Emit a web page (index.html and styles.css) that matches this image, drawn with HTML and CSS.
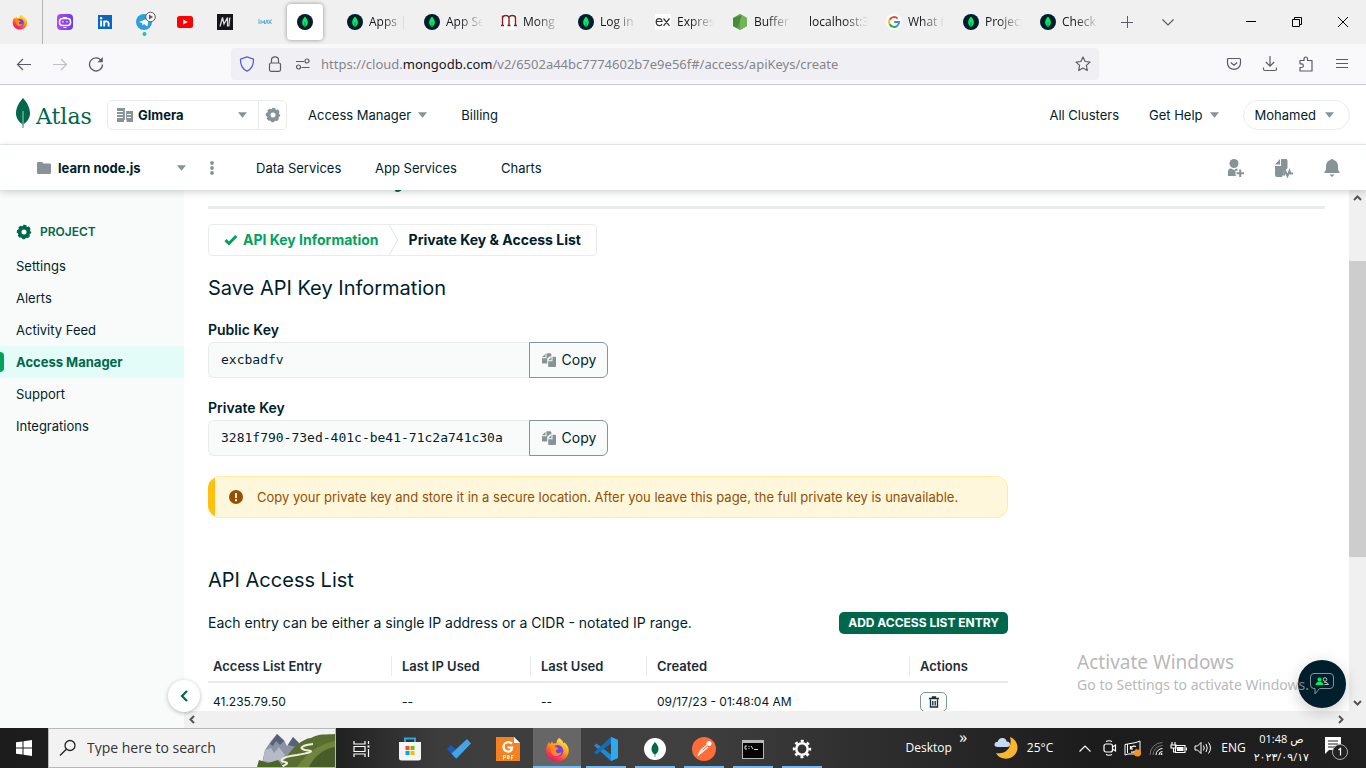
FILE: index.html
```html
<!DOCTYPE html>
<html lang="en">
<head>
<meta charset="utf-8">
<title>Create API Key | Atlas</title>
<link rel="stylesheet" href="styles.css">
</head>
<body>
<svg class="defs" aria-hidden="true">
  <symbol id="mongo" viewBox="0 0 16 16"><circle cx="8" cy="8" r="8" fill="#001e2b"/><path d="M8 2.600C9.800 4.600 10.800 6.400 10.800 8.500 10.800 10.600 9.600 12 8.400 12.600L8.200 13.800H7.800L7.600 12.600C6.400 12 5.200 10.600 5.200 8.500 5.200 6.400 6.200 4.600 8 2.600Z" fill="#00ed64"/><path d="M8 8v5" stroke="#00684a" stroke-width=".7"/></symbol>
  <symbol id="gear" viewBox="0 0 16 16"><circle cx="8" cy="8" r="4.400" fill="none" stroke="currentColor" stroke-width="3.800"/><circle cx="8" cy="8" r="6.300" fill="none" stroke="currentColor" stroke-width="1.800" stroke-dasharray="3.100 1.848" stroke-dashoffset="1.550"/></symbol>
  <symbol id="caret" viewBox="0 0 9 6"><path d="M0 .300h9L4.500 5.700Z" fill="currentColor"/></symbol>
  <symbol id="copy" viewBox="0 0 16 16"><path d="M1 5.200 4.500 1.700V5.200ZM5.500 1.200H9.500L10.300 2V4.500H8.500L6.200 6.800V11.500H2C1.400 11.500 1 11.100 1 10.500V6.200H5.500Z" fill="currentColor"/><path d="M7.200 8.200 10.500 5V8.200ZM11.500 4.800H14C14.600 4.800 15 5.200 15 5.800V14C15 14.600 14.600 15 14 15H8.200C7.600 15 7.200 14.600 7.200 14V9.200H11.500Z" fill="currentColor"/></symbol>
  <symbol id="firefox" viewBox="0 0 24 24"><defs><linearGradient id="ffg" x1=".8" y1="0" x2=".2" y2="1"><stop offset="0" stop-color="#fff44f"/><stop offset=".45" stop-color="#ff980e"/><stop offset=".75" stop-color="#ff3750"/><stop offset="1" stop-color="#eb0878"/></linearGradient></defs><path d="M13.500 1C16 2.500 17.300 4.200 17.800 6L19 5.200C21.800 8 23 10.500 22.800 13.600 22.400 19.300 17.800 23.400 12 23.400 5.800 23.400 1 18.800 1 12.800 1 9.500 2.300 6.800 4 4.800L4.800 7 6.800 4.200 7.800 6.500C9 6 10 5.900 11 6.200 11 4 12 2.200 13.500 1Z" fill="url(#ffg)"/><circle cx="12" cy="13.300" r="5.700" fill="#7542e5"/><path d="M5.500 9.500C8 8 9.500 8.500 11.500 10.300 13 10.500 13.300 11.300 11.800 12 10 12.500 9.800 14 11.300 15 13.300 16.200 15 15 16.200 14.200 15.500 17.500 12.500 19 9.500 18 6.500 17 4.800 13.200 5.500 9.500Z" fill="#ff8a16"/></symbol>
</svg>

<header class="browser">
  <div class="tabs">
    <button class="view-tab" aria-label="Firefox View"><svg width="16" height="16"><use href="#firefox"/></svg></button>
    <button class="pin" aria-label="Chatbot"><svg width="16" height="16" viewBox="0 0 16 16"><defs><linearGradient id="bot"><stop stop-color="#b04bf5"/><stop offset="1" stop-color="#6a3de8"/></linearGradient></defs><rect width="16" height="16" rx="4" fill="url(#bot)"/><rect x="2.500" y="4.500" width="11" height="7" rx="3" fill="none" stroke="#fff" stroke-width="1.500"/><path d="M6 7v1.500M10 7v1.500M6.500 13.500h3M6 3.500h4" stroke="#fff" stroke-width="1.200"/></svg></button>
    <button class="pin" aria-label="LinkedIn"><svg width="14" height="14" viewBox="0 0 14 14"><path d="M0 0h14v14H0Z" fill="#0a66c2"/><path d="M3.100 5.500V11.500M6.200 5.500V11.500M6.200 8.500C6.200 5.800 10.600 5.500 10.600 8.500V11.500" fill="none" stroke="#fff" stroke-width="1.900"/><circle cx="3.100" cy="3.200" r="1.200" fill="#fff"/></svg></button>
    <button class="pin" aria-label="Telegram"><svg width="22" height="28" viewBox="0 0 22 28"><circle cx="10" cy="14" r="8" fill="#2ba0d9"/><path d="M5 14 15 10 13.300 18.500 10 16 8.500 17.500 8.200 15Z" fill="#fff"/><circle cx="16.500" cy="9" r="4.800" fill="#f5f5f5" stroke="#5b5b66" stroke-width="1"/><path d="M15 6.500 19 9 15 11.500Z" fill="#5b5b66"/><circle cx="10.500" cy="26" r="2" fill="#2ac3a2"/></svg></button>
    <button class="pin" aria-label="YouTube"><svg width="16" height="12" viewBox="0 0 16 12"><rect width="16" height="12" rx="2.500" fill="#f00"/><path d="M6.200 3.500 10.800 6 6.200 8.500Z" fill="#fff"/></svg></button>
    <button class="pin" aria-label="Medium"><svg width="16" height="16" viewBox="0 0 16 16"><path d="M0 0h16v16H0Z" fill="#15141a"/><path d="M3 12.500 5.500 3.500 7 10 10.500 3.500V12.500M12.800 3.500 11.800 12.500" fill="none" stroke="#ddd" stroke-width="1.300"/></svg></button>
    <button class="pin" aria-label="Imax"><svg width="14" height="6" viewBox="0 0 14 6"><path d="M1 0V5M3 5V1.500L5 4 6.500 1V5M7.500 5 9 1 10.200 5M10.500.500 13.500 5M13.500.500 10.500 5" fill="none" stroke="#55afd8" stroke-width="1"/></svg></button>
    <button class="pin active" aria-label="Atlas"><svg width="16" height="16"><use href="#mongo"/></svg></button>
    <div class="tab-list">
      <button class="tab"><svg width="16" height="16"><use href="#mongo"/></svg><span>Apps |</span></button>
      <button class="tab"><svg width="16" height="16"><use href="#mongo"/></svg><span>App Se</span></button>
      <button class="tab"><svg width="16" height="16" viewBox="0 0 16 16"><path d="M0 0h16v16H0Z" fill="#fff"/><path d="M1.500 11.500V1.500M1.500 4C2 1 8 .500 8 4V11.500M8 4C8 .500 14.500 1 14.500 4V11.500M0 11.500H3M6.500 11.500H9.500M13 11.500H16" fill="none" stroke="#8e1c1f" stroke-width="1.400"/></svg><span>Mong</span></button>
      <button class="tab"><svg width="16" height="16"><use href="#mongo"/></svg><span>Log in</span></button>
      <button class="tab"><svg width="16" height="16" viewBox="0 0 16 16"><path d="M0 0h16v16H0Z" fill="#fff"/><path d="M1.500 7.500H7C7 3.500 1.200 3.500 1.200 8 1.200 12.500 6 12.200 7 10M8.500 4.500 14.500 11.800M14.500 4.500 8.500 11.800" fill="none" stroke="#333" stroke-width="1.200"/></svg><span>Expres</span></button>
      <button class="tab"><svg width="16" height="16" viewBox="0 0 16 16"><path d="M8 0 15 4V12L8 16 1 12V4Z" fill="#5a9e48"/><path d="M8 0 15 4V12L8 16Z" fill="#72b553"/><path d="M1 4 10 1.200 5 14.200 1 12Z" fill="#4b8a3c"/></svg><span>Buffer</span></button>
      <button class="tab"><span>localhost:3</span></button>
      <button class="tab"><svg width="16" height="16" viewBox="0 0 16 16"><circle cx="8" cy="8" r="8" fill="#fff"/><g fill="none" stroke-width="2"><path d="M11.500 4.500A5 5 0 0 0 3.600 5.700" stroke="#ea4335"/><path d="M3.600 5.700A5 5 0 0 0 3.600 10.300" stroke="#fbbc05"/><path d="M3.600 10.300A5 5 0 0 0 11.300 11.700" stroke="#34a853"/><path d="M11.300 11.700A5 5 0 0 0 13 8H8.200" stroke="#4285f4"/></g></svg><span>What i</span></button>
      <button class="tab"><svg width="16" height="16"><use href="#mongo"/></svg><span>Project</span></button>
      <button class="tab"><svg width="16" height="16"><use href="#mongo"/></svg><span>Check</span></button>
    </div>
    <button class="strip-btn plus" aria-label="New tab"><svg width="12" height="12" viewBox="0 0 12 12"><path d="M6.500 0v12M0 6.500h12" stroke="#5b5b66"/></svg></button>
    <button class="strip-btn" aria-label="List all tabs"><svg width="12" height="7" viewBox="0 0 12 7"><path d="M.500.500 6 6 11.500.500" fill="none" stroke="#5b5b66" stroke-width="1.200"/></svg></button>
    <div class="window-btns">
      <button aria-label="Minimize"><svg width="10" height="10" viewBox="0 0 10 10"><path d="M0 4.500h10" stroke="#000"/></svg></button>
      <button aria-label="Restore"><svg width="10" height="10" viewBox="0 0 10 10"><path d="M.500 2.500h7v7h-7ZM2.500 2.500V.500h7v7h-2" fill="none" stroke="#000"/></svg></button>
      <button aria-label="Close"><svg width="10" height="10" viewBox="0 0 10 10"><path d="M0 0l10 10M10 0 0 10" stroke="#000"/></svg></button>
    </div>
  </div>
  <div class="toolbar">
    <button aria-label="Back"><svg width="16" height="16" viewBox="0 0 16 16"><path d="M15 8.500H1.500M7 3 1.500 8.500 7 14" fill="none" stroke="#5b5b66" stroke-width="1.200"/></svg></button>
    <button aria-label="Forward" disabled><svg width="16" height="16" viewBox="0 0 16 16"><path d="M1 8.500H14.500M9 3 14.500 8.500 9 14" fill="none" stroke="#bfbfc5" stroke-width="1.200"/></svg></button>
    <button aria-label="Reload"><svg width="16" height="16" viewBox="0 0 16 16"><path d="M13.500 5A6.500 6.500 0 1 0 14.500 8.500" fill="none" stroke="#5b5b66" stroke-width="1.300"/><path d="M14.800 1V6.300H9.500Z" fill="#5b5b66"/></svg></button>
    <div class="urlbar">
      <svg width="16" height="16" viewBox="0 0 16 16"><path d="M8 .800 14.500 3.200C14.800 8.500 13.200 12.500 8 15.200 2.800 12.500 1.200 8.500 1.500 3.200Z" fill="none" stroke="#5a5fd8" stroke-width="1.300" stroke-linejoin="round"/></svg>
      <svg width="16" height="16" viewBox="0 0 16 16"><rect x="2.500" y="7" width="11" height="8.300" rx="1.500" fill="none" stroke="#5b5b66" stroke-width="1.200"/><path d="M4.500 7V4C4.500-.200 11.500-.200 11.500 4V7" fill="none" stroke="#5b5b66" stroke-width="1.200"/></svg>
      <svg width="16" height="16" viewBox="0 0 16 16"><g fill="none" stroke="#5b5b66" stroke-width="1.200"><path d="M1 5.500H9M6.500 11.500H14.500"/><circle cx="12" cy="5" r="2"/><circle cx="3.500" cy="11" r="2"/></g></svg>
      <div class="url" role="textbox" contenteditable="true" spellcheck="false" aria-label="Address">https://cloud.<b>mongodb.com</b>/v2/6502a44bc7774602b7e9e56f#/access/apiKeys/create</div>
      <button aria-label="Bookmark"><svg width="16" height="16" viewBox="0 0 16 16"><path d="M8 1 10.100 5.500 15 6.100 11.400 9.400 12.300 14.500 8 12 3.700 14.500 4.600 9.400 1 6.100 5.900 5.500Z" fill="none" stroke="#5b5b66" stroke-width="1.200" stroke-linejoin="round"/></svg></button>
    </div>
    <div class="tools">
      <button aria-label="Pocket"><svg width="16" height="16" viewBox="0 0 16 16"><path d="M2.500 2.500H13.500Q14.500 2.500 14.500 3.500V7C14.500 15.500 1.500 15.500 1.500 7V3.500Q1.500 2.500 2.500 2.500ZM4.800 6.500 8 9.300 11.200 6.500" fill="none" stroke="#5b5b66" stroke-width="1.200"/></svg></button>
      <button aria-label="Downloads"><svg width="16" height="16" viewBox="0 0 16 16"><path d="M8 0V10M3.800 6 8 10.200 12.200 6M1.500 11.500V13Q1.500 14.500 3 14.500H13Q14.500 14.500 14.500 13V11.500" fill="none" stroke="#5b5b66" stroke-width="1.200"/></svg></button>
      <button aria-label="Extensions"><svg width="16" height="16" viewBox="0 0 16 16"><path d="M2 7V4.500H6V3C6 .300 9.500.300 9.500 3V4.500H14V15H2V11.500H3.500C6 11.500 6 7.800 3.500 7.800H2Z" fill="none" stroke="#5b5b66" stroke-width="1.200" stroke-linejoin="round"/></svg></button>
      <button aria-label="Menu"><svg width="12" height="12" viewBox="0 0 12 12"><path d="M0 1.500h12M0 5.500h12M0 9.500h12" stroke="#5b5b66"/></svg></button>
    </div>
  </div>
</header>

<div class="app">
  <header class="topnav">
    <a class="logo" href="#"><svg width="14" height="30" viewBox="0 0 14 30"><path d="M7 0C11 4.500 14 9.500 14 15.500 14 20 11 24 7.700 26L7.300 30H6.700L6.300 26C3 24 0 20 0 15.500 0 9.500 3 4.500 7 0Z" fill="#00684a"/><path d="M7 13V29" stroke="#a9c8bd"/></svg><span>Atlas</span></a>
    <div class="org">
      <svg width="16" height="14" viewBox="0 0 16 14"><path d="M0 0H8V3H16V14H9.500V12H7V14H0Z" fill="#889397"/><path d="M0 3.500H6M0 6.500H6M0 9.500H6M8.500 1V14M10 6.500H14M10 9.500H14" stroke="#fff" stroke-width="1.200"/></svg>
      <select aria-label="Organization"><option>Glmera</option></select>
      <svg class="caret" width="9" height="6"><use href="#caret"/></svg>
      <button aria-label="Organization settings"><svg width="16" height="16"><use href="#gear"/></svg></button>
    </div>
    <button class="nav-menu first">Access Manager <svg class="caret" width="9" height="6"><use href="#caret"/></svg></button>
    <a class="billing" href="#">Billing</a>
    <nav class="account">
      <a href="#">All Clusters</a>
      <button class="nav-menu">Get Help <svg class="caret" width="9" height="6"><use href="#caret"/></svg></button>
      <button class="user">Mohamed <svg class="caret" width="9" height="6"><use href="#caret"/></svg></button>
    </nav>
  </header>
  <div class="subnav">
    <svg width="14" height="12" viewBox="0 0 14 12"><path d="M0 1.200Q0 0 1.200 0H5.200L6.500 1.500H12.800Q14 1.500 14 2.700V10.800Q14 12 12.800 12H1.200Q0 12 0 10.800Z" fill="#889397"/></svg>
    <select aria-label="Project"><option>learn node.js</option></select>
    <svg class="caret" width="9" height="6"><use href="#caret"/></svg>
    <button class="dots" aria-label="Project menu"><svg width="4" height="14" viewBox="0 0 4 14"><g fill="#889397"><circle cx="2" cy="2" r="1.900"/><circle cx="2" cy="7" r="1.900"/><circle cx="2" cy="12" r="1.900"/></g></svg></button>
    <nav class="products"><a class="data" href="#">Data Services</a><a class="services" href="#">App Services</a><a href="#">Charts</a></nav>
    <div class="sub-icons">
      <button aria-label="Invite"><svg width="18" height="20" viewBox="0 0 18 20"><g fill="#889397"><circle cx="7" cy="5.500" r="4.500"/><path d="M1 18V13.500Q1 10.500 4 10.500L7 12 9.500 10.500 10.500 10.800V12.800H8.500V17.500H9.500V18Z"/><path d="M12.200 11.500h2v2.700h2.800v2h-2.800V19h-2v-2.800H9.500v-2h2.700Z"/></g></svg></button>
      <button aria-label="Activity"><svg width="20" height="20" viewBox="0 0 20 20"><g fill="#889397"><path d="M1 6.500 6 1V6.500ZM7 1H12Q13.500 1 13.500 2.500V10L10 14 8 19H3Q1 19 1 17V8H7Z"/></g><path d="M9.500 17.500 11.500 13.500 13.500 18 15.500 13 16.500 15.500H19" fill="none" stroke="#889397" stroke-width="2"/></svg></button>
      <button aria-label="Notifications"><svg width="16" height="20" viewBox="0 0 16 20"><path d="M8 1Q9.500 1 9.500 2C12.500 2.800 14 5 14 8V11.500L15.500 14V15H.500V14L2 11.500V8C2 5 3.500 2.800 6.500 2Q6.500 1 8 1ZM5.500 16.500H10.500L8 19Z" fill="#889397"/></svg></button>
    </div>
  </div>

  <div class="workspace">
    <aside class="sidebar">
      <h2><svg width="16" height="16"><use href="#gear"/></svg>PROJECT</h2>
      <nav>
        <a href="#">Settings</a><a href="#">Alerts</a><a href="#">Activity Feed</a><a class="current" href="#">Access Manager</a><a href="#">Support</a><a href="#">Integrations</a>
      </nav>
      <button class="collapse" aria-label="Collapse sidebar"><svg width="10" height="12" viewBox="0 0 10 12"><path d="M8 1 3 6 8 11" fill="none" stroke="#00684a" stroke-width="2.200"/></svg></button>
    </aside>
    <div class="pane">
      <div class="pane-row">
        <main>
          <h1>Create API Key</h1>
          <hr>
          <ol class="steps">
            <li class="done"><svg width="14" height="12" viewBox="0 0 14 12"><path d="M1.500 6.200 5 9.500 12.300 2" fill="none" stroke="#00a35c" stroke-width="3"/></svg>API Key Information</li>
            <li class="sep" aria-hidden="true"><svg width="10" height="30" viewBox="0 0 10 30"><path d="M.500 0 8.500 15 .500 30" fill="none" stroke="#dfe5e2"/></svg></li>
            <li>Private Key &amp; Access List</li>
          </ol>
          <h3>Save API Key Information</h3>
          <div class="field">
            <label for="public">Public Key</label>
            <div class="copyable"><input id="public" readonly value="excbadfv"><button><svg width="16" height="16"><use href="#copy"/></svg>Copy</button></div>
          </div>
          <div class="field">
            <label for="private">Private Key</label>
            <div class="copyable"><input id="private" readonly value="3281f790-73ed-401c-be41-71c2a741c30a"><button><svg width="16" height="16"><use href="#copy"/></svg>Copy</button></div>
          </div>
          <div class="banner" role="alert"><svg width="14" height="14" viewBox="0 0 14 14"><circle cx="7" cy="7" r="7" fill="#944f01"/><path d="M7 3V8M7 9.300V11.200" stroke="#fef7db" stroke-width="2"/></svg><p>Copy your private key and store it in a secure location. After you leave this page, the full private key is unavailable.</p></div>
          <h3 class="access-title">API Access List</h3>
          <div class="access-intro"><p>Each entry can be either a single IP address or a CIDR - notated IP range.</p><button>ADD ACCESS LIST ENTRY</button></div>
          <table>
            <colgroup><col class="c1"><col class="c2"><col class="c3"><col class="c4"><col></colgroup>
            <thead><tr><th><span>Access List Entry</span></th><th><span>Last IP Used</span></th><th><span>Last Used</span></th><th><span>Created</span></th><th><span>Actions</span></th></tr></thead>
            <tbody><tr><td>41.235.79.50</td><td>--</td><td>--</td><td>09/17/23 - 01:48:04 AM</td><td><button aria-label="Delete"><svg width="12" height="12" viewBox="0 0 12 12"><path d="M1 2.500H11M4.500 2V1H7.500V2M2.500 3.500V11H9.500V3.500M4.800 5V9.500M7.200 5V9.500" fill="none" stroke="#1c2d38" stroke-width="1.300"/></svg></button></td></tr></tbody>
          </table>
        </main>
        <div class="vscroll"><svg width="9" height="6" viewBox="0 0 9 6"><path d="M1 5 4.500 1.500 8 5" fill="none" stroke="#555" stroke-width="2"/></svg><div class="thumb"></div><svg width="9" height="6" viewBox="0 0 9 6"><path d="M1 1 4.500 4.500 8 1" fill="none" stroke="#555" stroke-width="2"/></svg></div>
      </div>
      <div class="hscroll"><svg width="6" height="9" viewBox="0 0 6 9"><path d="M5 1 1.500 4.500 5 8" fill="none" stroke="#555" stroke-width="2"/></svg><svg width="6" height="9" viewBox="0 0 6 9"><path d="M1 1 4.500 4.500 1 8" fill="none" stroke="#555" stroke-width="2"/></svg></div>
      <button class="chat" aria-label="Chat"><svg width="26" height="26" viewBox="0 0 26 26"><path d="M5 2.500H21Q24.500 2.500 24.500 6V14Q24.500 17.500 21 17.500H10.500L6 23V17.500H5Q1.500 17.500 1.500 14V6Q1.500 2.500 5 2.500Z" fill="none" stroke="#889397"/><g fill="#00ed64"><circle cx="10.500" cy="8.500" r="2"/><path d="M6.500 14Q7 10.800 10.500 10.800T14.500 14Z"/></g><circle cx="16" cy="8.500" r="1.800" fill="none" stroke="#c1c7c6"/><path d="M15 11.200Q19 11 19.500 13.500H15.500" fill="none" stroke="#c1c7c6"/></svg></button>
      <div class="watermark"><p class="big">Activate Windows</p><p>Go to Settings to activate Windows.</p></div>
    </div>
  </div>
</div>

<footer class="taskbar">
  <button class="start" aria-label="Start"><svg width="16" height="16" viewBox="0 0 16 16"><path d="M0 2.300 6.500 1.400V7.500H0ZM7.500 1.200 16 0V7.500H7.500ZM0 8.500H6.500V14.600L0 13.700ZM7.500 8.500H16V16L7.500 14.800Z" fill="#fff"/></svg></button>
  <label class="search">
    <svg width="18" height="18" viewBox="0 0 18 18"><circle cx="11" cy="6.500" r="5" fill="none" stroke="#222" stroke-width="1.300"/><path d="M7.300 10.200 1 16.500" stroke="#222" stroke-width="1.300"/></svg>
    <input type="text" placeholder="Type here to search" aria-label="Search">
    <svg width="78" height="34" viewBox="0 0 78 34"><path d="M4 34 8 17 14 8 20 1 27 7 30 13 36 4 42 10 55 34Z" fill="#8b93a5"/><path d="M13 11 20 1 27 8 23 12 19 8 16 13ZM31 12 36 4 42 10 39 14Z" fill="#596078"/><path d="M8 17 14 15 17 20 22 14 28 22 20 30 6 28Z" fill="#b6bac7"/><path d="M24 34C30 20 43 6 54 5 62 0 70 2 78 1V34Z" fill="#596d31"/><path d="M40 34C50 20 60 12 78 8V34Z" fill="#6f843c"/><path d="M52 34C58 22 67 16 78 14V34Z" fill="#475c29"/><path d="M56 11C47 12 40 15 48 17 60 18 52 20 40 22 24 24 21 28 28 29 33 30 28 32 24 34" fill="none" stroke="#eceddc" stroke-width="2"/><path d="M0 34 2 27 11 30 21 27 26 34Z" fill="#4d6529"/></svg>
  </label>
  <div class="apps">
    <button aria-label="Task view"><svg width="17" height="16" viewBox="0 0 17 16"><path d="M1 0V3H12V0M1 16V13H12V16M1 5.500H12V10.500H1ZM15.500 0V3M15.500 8V16" fill="none" stroke="#fff" stroke-width="1.200"/><path d="M14.500 4.500h2v2h-2Z" fill="#fff"/></svg></button>
    <button aria-label="Store"><svg width="24" height="24" viewBox="0 0 24 24"><path d="M7 6V1.500H17V6" fill="none" stroke="#23a9e1" stroke-width="2"/><path d="M1 5H23V21Q23 23.500 20.500 23.500H3.500Q1 23.500 1 21Z" fill="#f4f4f4"/><path d="M7.500 9H11.500V13H7.500Z" fill="#f25022"/><path d="M12.500 9H16.500V13H12.500Z" fill="#7fba00"/><path d="M7.500 14H11.500V18H7.500Z" fill="#00a4ef"/><path d="M12.500 14H16.500V18H12.500Z" fill="#ffb900"/></svg></button>
    <button aria-label="To Do"><svg width="24" height="22" viewBox="0 0 24 22"><path d="M0 11 4 7 12 15 8 19.500Z" fill="#185abd"/><path d="M8 19.500 4.500 15.500 20 1 24 5.500 9.500 20.500Z" fill="#41a5ee"/></svg></button>
    <button aria-label="PDF reader"><svg width="24" height="24" viewBox="0 0 24 24"><path d="M0 0H18L24 6V24H0Z" fill="#f58220"/><path d="M18 0V6H24Z" fill="#fff"/><path d="M16 6.500C12 3.500 7.500 6 7.500 10 7.500 14.500 13 16 15.500 13L16 10.500H11.500" fill="none" stroke="#fff" stroke-width="2.200"/><path d="M7.500 22.500V18.500H9.500V20.500H7.500M11.500 18.500V21.500H13V18.500ZM15.500 22.500V18.500H17.500M15.500 20.500H17" fill="none" stroke="#fff"/></svg></button>
    <button class="on open" aria-label="Firefox"><svg width="25" height="25"><use href="#firefox"/></svg></button>
    <button class="open" aria-label="VS Code"><svg width="24" height="24" viewBox="0 0 24 24"><path d="M17 0 24 3V21L17 24 0 8.500 2.500 6.500 17 17.500Z" fill="#1f8ad2"/><path d="M17 6.500 2.500 17.500 0 15.500 17 0Z" fill="#0f6fb8"/><path d="M17 0 24 3V21L17 24Z" fill="#2ea8ee"/></svg></button>
    <button class="open" aria-label="Compass"><svg width="22" height="22" viewBox="0 0 22 22"><circle cx="11" cy="11" r="11" fill="#fff"/><path d="M11 4C17 10 14 15 11.300 16.500V19H10.700V16.500C8 15 5 10 11 4Z" fill="#00684a"/></svg></button>
    <button class="open" aria-label="Postman"><svg width="24" height="24" viewBox="0 0 24 24"><circle cx="12" cy="12" r="12" fill="#ff6c37"/><circle cx="17" cy="6.500" r="2.500" fill="#fff"/><path d="M15 8 9 13 10.500 14.500 16 10M9 13 6 18.500 10.500 14.500" fill="#ff6c37" stroke="#fff" stroke-width="1.300"/></svg></button>
    <button class="open" aria-label="Terminal"><svg width="22" height="19" viewBox="0 0 22 19"><path d="M0 0H22V19H0Z" fill="#b8b8b8"/><path d="M1 3H21V18H1Z" fill="#050505"/><path d="M5 6H3V9H5M7 6v1M7 8v1M9 6l2 3M12 9.500h4" fill="none" stroke="#ddd"/></svg></button>
    <button class="open" aria-label="Settings"><svg width="20" height="20" viewBox="0 0 20 20"><circle cx="10" cy="10" r="5.700" fill="none" stroke="#fff" stroke-width="2.500"/><circle cx="10" cy="10" r="8" fill="none" stroke="#fff" stroke-width="2.400" stroke-dasharray="3 3.283" stroke-dashoffset="1.500"/></svg></button>
  </div>
  <div class="tray">
    <span class="desk">Desktop</span><button class="more" aria-label="More">»</button>
    <button class="weather"><svg width="24" height="24" viewBox="0 0 24 24"><path d="M16 1C24 4 26 14 20 19.500 14 25 5 23 2 17 11 19 19 12 16 1Z" fill="#fbb62d"/><path d="M4 11Q0 11 .500 8 1 5.500 3.500 6 5 1.500 9 2 12.500 2.500 12.500 5.500 16 5.500 16 8.500 16 11 13 11Z" fill="#c8daf3"/></svg>25°C</button>
    <div class="status">
      <button class="chevron" aria-label="Hidden icons"><svg width="12" height="7" viewBox="0 0 12 7"><path d="M.500 6.500 6 1 11.500 6.500" fill="none" stroke="#fff" stroke-width="1.200"/></svg></button>
      <button aria-label="Meet now"><svg width="14" height="16" viewBox="0 0 14 16"><g fill="none" stroke="#fff" stroke-width="1.200"><rect x="1" y="4" width="8.500" height="8" rx="2"/><path d="M9.500 7 12.500 5V11L9.500 9M3 1.500Q6 0 9 1.500M3 14.500Q6 16 9 14.500"/></g></svg></button>
      <button aria-label="Updates"><svg width="18" height="17" viewBox="0 0 18 17"><path d="M1 4.500 12 2.500 16 1V14H4L1 15ZM3.500 13V4" fill="none" stroke="#fff"/><path d="M12 6.500Q8 5 6.500 9M6.500 6V9H9M7 12Q11 13 12.500 9.500" fill="none" stroke="#fff" stroke-width="1.200"/><circle cx="13.500" cy="13" r="3.500" fill="#f7941d"/></svg></button>
      <button aria-label="Network"><svg width="14" height="14" viewBox="0 0 14 14"><g fill="none"><path d="M1 14A12.500 12.500 0 0 1 13.500 1.500M4 14A9.500 9.500 0 0 1 13.500 4.500" stroke="#777"/><path d="M7 14A6.500 6.500 0 0 1 13.500 7.500M10 14A3.500 3.500 0 0 1 13.500 10.500" stroke="#fff"/></g><circle cx="12.500" cy="13" r="1" fill="#fff"/></svg></button>
      <button aria-label="Battery"><svg width="17" height="14" viewBox="0 0 17 14"><path d="M5.500 4.500H15V11.500H5.500ZM16.500 6.500V9.500M2 1V4M5 1V4M1 4H6V7H1ZM3.500 7V11H5" fill="none" stroke="#fff" stroke-width="1.100"/><path d="M7 6H13.500V10H7Z" fill="#fff"/></svg></button>
      <button aria-label="Volume"><svg width="18" height="14" viewBox="0 0 18 14"><path d="M1 5H3.500L7 1.500V12.500L3.500 9H1ZM9.500 4.500Q11 7 9.500 9.500M12 3Q14.500 7 12 11M14.500 1.500Q18.500 7 14.500 12.500" fill="none" stroke="#fff"/></svg></button>
    </div>
    <span class="lang">ENG</span>
    <div class="clock"><span>01:48 ص</span><span>٢٠٢٣/٠٩/١٧</span></div>
    <button class="notify" aria-label="Notifications"><svg width="24" height="26" viewBox="0 0 24 26"><path d="M1 2H17V15H5L1 19Z" fill="#fff"/><path d="M4 6H14M4 9H14M4 12H11" stroke="#222" stroke-width="1.200"/><circle cx="16" cy="17" r="7.500" fill="#222" stroke="#aaa"/><path d="M14.500 15 16.500 13.500V20.500" fill="none" stroke="#fff" stroke-width="1.200"/></svg></button>
  </div>
</footer>
</body>
</html>
```
FILE: styles.css
```css
* { box-sizing: border-box; }
body {
  margin: 0;
  height: 100vh;
  display: flex;
  flex-direction: column;
  overflow: hidden;
  background: #fff;
  color: #001e2b;
  font: 13px/20px Inter, "Liberation Sans", sans-serif;
}
button, input, select { font: inherit; color: inherit; }
button { padding: 0; border: 0; background: none; display: flex; align-items: center; justify-content: center; flex: none; }
a { color: inherit; text-decoration: none; }
svg { flex: none; display: block; }
p, h1, h2, h3, ol { margin: 0; padding: 0; }
.defs { position: absolute; width: 0; height: 0; }

/* Browser chrome */
.browser { flex: none; background: #f9f9fb; border-bottom: 1px solid #ccccd1; font-family: "Open Sans", "Noto Sans", sans-serif; }
.tabs { display: flex; align-items: center; height: 44px; background: #f0f0f0; color: #15141a; font-size: 12px; }
.view-tab { width: 43px; height: 44px; padding-right: 2px; border-right: 1px solid #b5b5b8; margin-right: 2px; }
.pin { width: 40px; height: 36px; }
.pin.active { width: 36px; margin: 0 2px; background: #fff; border-radius: 4px; box-shadow: 0 0 4px rgba(0, 0, 0, .4); }
.tab-list { display: flex; margin-left: 12px; min-width: 0; }
.tab { width: 77px; height: 36px; padding: 0 0 0 10px; gap: 6px; justify-content: flex-start; }
.tab span { flex: 1; min-width: 0; white-space: nowrap; text-align: left; -webkit-mask-image: linear-gradient(to left, transparent 8px, #000 32px); mask-image: linear-gradient(to left, transparent 8px, #000 32px); }
.strip-btn { width: 40px; height: 36px; }
.strip-btn.plus { margin-right: 1px; }
.window-btns { display: flex; margin-left: auto; }
.window-btns button { width: 46px; height: 36px; }
.toolbar { display: flex; align-items: center; height: 40px; padding: 0 6px; }
.toolbar > button, .tools button { width: 36px; height: 32px; }
.urlbar { display: flex; align-items: center; flex: 1; height: 32px; margin: 0 117px; padding: 0 8px; gap: 12px; border-radius: 4px; background: #f0f0f4; min-width: 0; }
.url { flex: 1; min-width: 0; margin-left: -2px; overflow: hidden; white-space: nowrap; font-family: "Noto Sans", sans-serif; font-size: 13px; color: #85848b; outline: 0; }
.url b { font-weight: 400; color: #15141a; }
.tools { display: flex; }

/* Atlas navigation */
.app { flex: 1; min-height: 0; display: flex; flex-direction: column; }
.topnav { flex: none; display: flex; align-items: center; height: 60px; padding: 0 16px; border-bottom: 1px solid #e8edeb; }
.logo { display: flex; align-items: center; gap: 6px; width: 91px; height: 34px; color: #00684a; font: 22px/30px "DejaVu Serif", serif; }
.logo svg { align-self: flex-start; }
.logo span { align-self: flex-end; }
.caret { color: #889397; }
.org { display: flex; align-items: center; width: 180px; height: 30px; padding-left: 9px; border: 1px solid #e8edeb; border-radius: 5px; font-weight: 700; }
select { appearance: none; border: 0; background: none; padding: 0; margin: 0; flex: 1; min-width: 0; font-weight: 700; outline: 0; }
.org select { margin-left: 5px; }
.org button { width: 28px; height: 28px; margin-left: 11px; border-left: 1px solid #e8edeb; color: #889397; }
.nav-menu { gap: 7px; }
.first { margin: 0 34px 0 21px; }
.account { display: flex; align-items: center; gap: 30px; margin-left: auto; }
.user { gap: 9px; height: 30px; padding: 0 15px 0 11px; margin-left: -6px; border: 1px solid #e8edeb; border-radius: 15px; }
.subnav { flex: none; position: relative; z-index: 2; display: flex; align-items: center; height: 45px; padding: 0 24px 0 37px; background: #fff; box-shadow: 0 2px 7px rgba(0, 30, 43, .2); }
.subnav select { flex: none; width: 119px; margin-left: 7px; }
.dots { width: 16px; height: 24px; margin: 0 36px 0 18px; }
.products { display: flex; }
.data { width: 119px; }
.services { width: 126px; }
.sub-icons { display: flex; gap: 24px; margin-left: auto; margin-right: -2px; }
.sub-icons button { width: 24px; height: 24px; }

/* Workspace */
.workspace { flex: 1; min-height: 0; display: flex; }
.sidebar { position: relative; flex: none; width: 184px; padding-top: 32px; background: #f9fbfa; }
.sidebar h2 { display: flex; align-items: center; gap: 8px; height: 20px; margin-bottom: 8px; padding-left: 16px; color: #00684a; font-size: 12px; font-weight: 600; }
.sidebar nav a { display: block; padding: 6px 16px; }
.sidebar nav .current { background: #e3fcf7; color: #00684a; font-weight: 700; position: relative; }
.current::before { content: ""; position: absolute; left: 0; top: 6px; width: 4px; height: 20px; border-radius: 0 4px 4px 0; background: #00a35c; }
.collapse { position: absolute; right: -16px; bottom: 16px; z-index: 3; width: 32px; height: 32px; border-radius: 50%; background: #fff; box-shadow: 0 1px 4px rgba(0, 30, 43, .3); }
.pane { position: relative; flex: 1; min-width: 0; display: flex; flex-direction: column; }
.pane-row { flex: 1; min-height: 0; display: flex; }
main { flex: 1; min-width: 0; overflow: hidden; padding: 0 24px; }
h1 { height: 40px; margin-top: -34px; line-height: 40px; font-size: 28px; font-weight: 600; color: #00684a; }
hr { height: 3px; margin: 10px 0 15px; border: 0; background: #e8edeb; }
.steps { display: inline-flex; align-items: center; height: 32px; padding: 0 15px; border: 1px solid #e8edeb; border-radius: 4px; list-style: none; font-size: 14px; font-weight: 700; }
.steps li { display: flex; align-items: center; gap: 5px; }
.steps .done { color: #00a35c; }
.steps .sep { margin: 0 10px; }
h3 { font-size: 20px; line-height: 24px; font-weight: 400; }
main h3 { margin: 20px 0; }
.field { width: 400px; margin-bottom: 20px; }
.field label { display: block; height: 22px; font-size: 14px; font-weight: 600; }
.copyable { display: flex; height: 36px; }
.copyable input { flex: 1; min-width: 0; padding: 0 12px; border: 1px solid #e8edeb; border-right: 0; border-radius: 6px 0 0 6px; background: #f9fbfa; font: 13px/20px "DejaVu Sans Mono", monospace; outline: 0; }
.copyable button { width: 79px; gap: 5px; border: 1px solid #889397; border-radius: 0 6px 6px 0; background: #f9fbfa; font-size: 14px; }
.copyable svg { color: #889397; }
.banner { display: flex; align-items: center; gap: 14px; max-width: 800px; height: 42px; padding-left: 20px; border: 1px solid #ffec9e; border-left: 0; border-radius: 12px; background: linear-gradient(90deg, #ffc010 7px, #fef7db 7px) border-box; color: #944f01; }
.banner svg { margin-left: 1px; }
main .access-title { margin: 50px 0 20px; }
.access-intro { display: flex; align-items: center; justify-content: space-between; max-width: 800px; height: 22px; }
.access-intro p { font-size: 14px; }
.access-intro button { height: 22px; padding: 0 9px; border-radius: 5px; background: #00684a; color: #fff; font-size: 12px; font-weight: 700; }
table { width: 100%; max-width: 800px; margin-top: 20px; border-collapse: collapse; table-layout: fixed; }
.c1 { width: 183px; }
.c2 { width: 139px; }
.c3 { width: 116px; }
.c4 { width: 263px; }
thead tr { height: 28px; border-bottom: 2px solid #e8edeb; }
th { padding: 0 0 4px; text-align: left; font-weight: 600; color: #1c2d38; }
th span { display: block; padding-left: 10px; border-left: 1px solid #e8edeb; }
th:first-child span { padding-left: 5px; border-left: 0; }
td { height: 38px; padding: 0 0 0 11px; font-size: 12px; }
td:first-child { padding-left: 5px; }
td button { width: 27px; height: 20px; border: 1px solid #889397; border-radius: 5px; background: #f9fbfa; }

.vscroll { flex: none; display: flex; flex-direction: column; align-items: center; width: 17px; padding: 5px 0; background: #f0f0f0; }
.thumb { width: 100%; height: 58%; margin: 60px 0 auto; background: #cdcdcd; }
.hscroll { flex: none; display: flex; align-items: center; justify-content: space-between; height: 17px; padding: 0 22px 0 5px; background: #f0f0f0; }
.chat { position: absolute; right: 20px; bottom: 20px; width: 48px; height: 48px; border-radius: 50%; background: #001e2b; box-shadow: 0 4px 16px rgba(0, 0, 0, .2); }
.watermark { position: absolute; right: 57px; bottom: 32px; color: rgba(165, 165, 165, .8); font: 14px/22px "Noto Sans", sans-serif; white-space: nowrap; pointer-events: none; }
.watermark .big { font-size: 19px; line-height: 24px; }

/* Windows taskbar */
.taskbar { flex: none; display: flex; height: 40px; background: linear-gradient(90deg, #1c1c1c, #222 25%, #3d3d3d 32%, #404040 50%, #303030 62%, #1c1c1c 80%, #202020); color: #fff; font: 12px/16px "Open Sans", "Noto Sans", sans-serif; }
.start { width: 48px; height: 40px; }
.search { display: flex; align-items: center; width: 288px; padding-left: 10px; border: 1px solid #b8b8b8; background: #f2f2f2; }
.search input { flex: 1; min-width: 0; margin-left: 10px; padding: 0; border: 0; background: none; color: #333; font-size: 14px; outline: 0; }
.search input::placeholder { color: #333; opacity: 1; }
.search svg:last-child { align-self: flex-end; }
.apps { display: flex; gap: 1px; margin-left: 1px; }
.apps button { width: 48px; height: 40px; padding-top: 2px; }
.open { background: linear-gradient(#76b9ed, #76b9ed) 50% 100% / 40px 2px no-repeat; }
.on { background: linear-gradient(#76b9ed, #76b9ed) 50% 100% / 48px 2px no-repeat #666; }
.tray { display: flex; align-items: center; margin-left: auto; }
.more { align-self: flex-start; width: 11px; height: 18px; margin: 0 25px 0 6px; font-size: 16px; }
.weather { gap: 9px; margin-right: 26px; }
.status { display: flex; align-items: center; gap: 7px; margin-right: 9px; }
.chevron { margin-right: 5px; }
.lang { margin-right: 8px; }
.clock { display: flex; flex-direction: column; align-items: center; margin-right: 15px; font: 11px/18px "Open Sans", "DejaVu Sans", sans-serif; }
.notify { margin-right: 18px; }
```
